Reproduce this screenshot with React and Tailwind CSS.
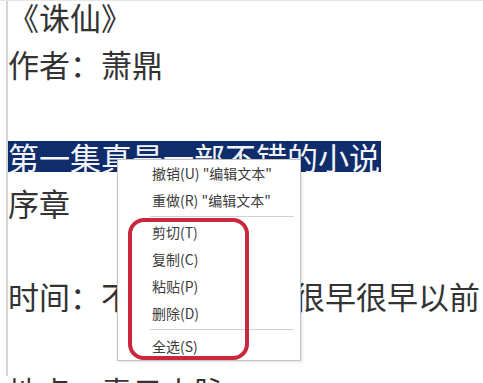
const FONT = '"Noto Sans CJK SC", "Noto Sans", sans-serif'

const MENU = [
  { label: '撤销(U) "编辑文本"' },
  { label: '重做(R) "编辑文本"' },
  { sep: true, h: 'h-[5px]' },
  { label: '剪切(T)' },
  { label: '复制(C)' },
  { label: '粘贴(P)' },
  { label: '删除(D)' },
  { sep: true, h: 'h-[6px]' },
  { label: '全选(S)' },
]

const ContextMenu = () => (
  <div
    className="absolute left-[117px] top-[158px] w-[184px] border border-[#c4c4c4] bg-white shadow-[1px_1px_3px_rgba(0,0,0,0.12)]"
    style={{ fontFamily: FONT }}
  >
    {MENU.map((item, i) =>
      item.sep ? (
        <div key={i} className={`${item.h} pl-[32px] pr-[6px] pt-[2px]`}>
          <div className="h-px bg-[#d2d2d2]" />
        </div>
      ) : (
        <div
          key={i}
          className="h-[27px] pl-[34px] flex items-center text-[14px] text-[#3c3c3c] whitespace-nowrap"
        >
          {item.label}
        </div>
      )
    )}
  </div>
)

export default function App() {
  return (
    <div className="relative w-[483px] h-[383px] overflow-hidden bg-white border-t border-[#e6e6e6]">
      <div
        className="ml-[6px] h-full border-l-2 border-[#d6d6d6] text-[31px] leading-[46.5px] text-[#333333] whitespace-nowrap"
        style={{ fontFamily: FONT }}
      >
        <div className="-mt-[7px]">《诛仙》</div>
        <div>作者：萧鼎</div>
        <div>&nbsp;</div>
        <div className="h-[46.5px] flex items-center">
          <span className="inline-block h-[31px] leading-[31px] bg-[#0e2d6a] text-[#f4f6fb] pr-[1px]">
            第一集真是一部不错的小说
          </span>
        </div>
        <div>序章</div>
        <div>&nbsp;</div>
        <div>
          时间：不知多少年前<span className="ml-[7px]">很早很早以前</span>
        </div>
        <div>&nbsp;</div>
        <div className="mt-[2px]">地点：青云山脉</div>
      </div>

      <ContextMenu />

      {/* red annotation box */}
      <div className="absolute left-[128px] top-[217px] w-[121px] h-[142px] border-4 border-[#c8283c] rounded-[16px]" />
    </div>
  )
}
